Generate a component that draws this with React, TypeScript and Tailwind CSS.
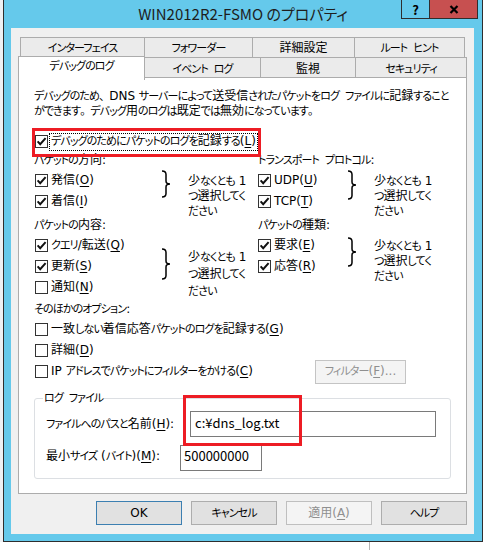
import clsx from "clsx";

// kana are set a little condensed next to the full-width kanji
const KANA = /([\u3000-\u30ff]+)/;
const PUNCT = /([、。])/;

function Kana({ s }: { s: string }) {
  return (
    <span className="text-[11px] tracking-[-0.9px]">
      {s.split(PUNCT).map((p, j) =>
        j % 2 ? (
          <span key={j} className="[font-feature-settings:normal]">
            {p}
          </span>
        ) : (
          p
        )
      )}
    </span>
  );
}

function Jp({ text }: { text: string }) {
  return (
    <>
      {text.split(KANA).map((s, i) => {
        if (i % 2) return <Kana key={i} s={s} />;
        if (s === " ")
          return (
            <span key={i} className="mx-[1px]">
              {" "}
            </span>
          );
        return s;
      })}
    </>
  );
}

// "&X" in a label marks the access key, drawn underlined
function Mn({ text }: { text: string }) {
  const i = text.indexOf("&");
  if (i < 0) return <Jp text={text} />;
  return (
    <>
      <Jp text={text.slice(0, i)} />
      <span className="underline decoration-1 underline-offset-[2px]">{text[i + 1]}</span>
      <Jp text={text.slice(i + 2)} />
    </>
  );
}

function CheckBox({ checked }: { checked?: boolean }) {
  return (
    <span className="flex h-[13px] w-[13px] shrink-0 items-center justify-center border border-[#333] bg-white">
      {checked && (
        <svg width="11" height="11" viewBox="0 0 11 11">
          <path d="M1.6 5.4 L4.2 8.2 L9.6 2.2" fill="none" stroke="#111" strokeWidth="2" />
        </svg>
      )}
    </span>
  );
}

function CheckRow({ label, checked, className }: { label: string; checked?: boolean; className?: string }) {
  return (
    <div className={clsx("flex items-center gap-[3px] whitespace-nowrap", className)}>
      <CheckBox checked={checked} />
      <span>
        <Mn text={label} />
      </span>
    </div>
  );
}

function Brace({ h }: { h: number }) {
  const m = h / 2;
  return (
    <svg width="10" height={h} viewBox={`0 0 10 ${h}`} className="shrink-0">
      <path
        d={`M1 1 C4 1 5 2 5 4.5 L5 ${m - 3} C5 ${m - 1} 6 ${m} 9 ${m} C6 ${m} 5 ${m + 1} 5 ${m + 3} L5 ${h - 4.5} C5 ${h - 2} 4 ${h - 1} 1 ${h - 1}`}
        fill="none"
        stroke="#000"
        strokeWidth="1.5"
      />
    </svg>
  );
}

type Item = [string, boolean];

function Group({
  title,
  items,
  rowClass,
  itemsClass,
  brace,
  braceClass,
  noteClass,
}: {
  title: string;
  items: Item[];
  rowClass: string;
  itemsClass: string;
  brace: number;
  braceClass: string;
  noteClass: string;
}) {
  return (
    <div>
      <div className="h-[16px] leading-[16px] whitespace-nowrap">
        <Jp text={title} />
      </div>
      <div className={clsx("mt-[2px] flex", rowClass)}>
        <div className={clsx("shrink-0", itemsClass)}>
          {items.map(([label, checked]) => (
            <CheckRow key={label} label={label} checked={checked} className="h-[21px]" />
          ))}
        </div>
        <div className={braceClass}>
          <Brace h={brace} />
        </div>
        <div className={clsx("ml-[17px] whitespace-nowrap", noteClass)}>
          <Jp text="少なくとも 1" />
          <br />
          <Jp text="つ選択してく" />
          <br />
          <Jp text="ださい" />
        </div>
      </div>
    </div>
  );
}

const topTabs = [
  { label: "インターフェイス", w: "w-[124px] border-l" },
  { label: "フォワーダー", w: "w-[108px] border-l" },
  { label: "詳細設定", w: "w-[102px] border-l" },
  { label: "ルート ヒント", w: "w-[111px] border-x" },
];

const frontTabs = [
  { label: "イベント ログ", w: "w-[116px]" },
  { label: "監視", w: "w-[95px]" },
  { label: "セキュリティ", w: "w-[111px]" },
];

function Tabs() {
  return (
    <div>
      <div className="ml-[2px] flex h-[20px]">
        {topTabs.map((t) => (
          <div
            key={t.label}
            className={clsx(
              "flex items-center justify-center border-t border-[#acacac] bg-[#ebebeb] pt-[2px] whitespace-nowrap",
              t.w
            )}
          >
            <span>
              <Jp text={t.label} />
            </span>
          </div>
        ))}
      </div>
      <div className="flex h-[20px]">
        <div className="relative z-10 -mt-px flex h-[24px] w-[127px] items-center justify-center border-x border-t border-[#acacac] bg-white pb-[5px]">
          <span>
            <Jp text="デバッグのログ" />
          </span>
        </div>
        {frontTabs.map((t) => (
          <div
            key={t.label}
            className={clsx(
              "flex items-center justify-center border-t border-r border-[#acacac] bg-[#ebebeb] pt-[3px] whitespace-nowrap",
              t.w
            )}
          >
            <span>
              <Jp text={t.label} />
            </span>
          </div>
        ))}
      </div>
    </div>
  );
}

function Panel() {
  return (
    <div className="relative h-[417px] border border-[#acacac] bg-white px-[15px] pt-[11px]">
      <p className="leading-[15px] whitespace-nowrap">
        <Jp text="デバッグのため、DNS サーバーによって送受信されたパケットをログ ファイルに記録すること" />
        <br />
        <Jp text="ができます。デバッグ用のログは既定では無効になっています。" />
      </p>

      <div className="mt-[12px] flex h-[21px] items-center gap-[1px] pl-px">
        <CheckBox checked />
        <span className="flex h-[18px] items-center border border-dotted border-black px-px whitespace-nowrap">
          <span>
            <Mn text="デバッグのためにパケットのログを記録する(&L)" />
          </span>
        </span>
      </div>

      <div className="grid grid-cols-[224px_1fr]">
        <Group
          title="パケットの方向:"
          items={[
            ["発信(&O)", true],
            ["着信(&I)", true],
          ]}
          rowClass="h-[42px]"
          itemsClass="w-[127px] pl-px"
          brace={28}
          braceClass="mt-0"
          noteClass="mt-[4px] leading-[15px]"
        />
        <Group
          title="トランスポート プロトコル:"
          items={[
            ["UDP(&U)", true],
            ["TCP(&T)", true],
          ]}
          rowClass="h-[42px]"
          itemsClass="w-[89px]"
          brace={30}
          braceClass="mt-0"
          noteClass="mt-[4px] leading-[15px]"
        />
        <div className="mt-[5px]">
          <Group
            title="パケットの内容:"
            items={[
              ["クエリ/転送(&Q)", true],
              ["更新(&S)", true],
              ["通知(&N)", false],
            ]}
            rowClass="h-[63px]"
            itemsClass="w-[127px] pl-px"
            brace={32}
            braceClass="mt-[13px]"
            noteClass="mt-[14px] leading-[16px]"
          />
        </div>
        <div className="mt-[5px]">
          <Group
            title="パケットの種類:"
            items={[
              ["要求(&E)", true],
              ["応答(&R)", true],
            ]}
            rowClass="h-[63px]"
            itemsClass="w-[89px]"
            brace={30}
            braceClass="mt-[2px]"
            noteClass="mt-[4px] leading-[15px]"
          />
        </div>
      </div>

      <div className="mt-[3px] h-[16px] leading-[16px]">
        <Jp text="そのほかのオプション:" />
      </div>
      <div className="mt-[2px] pl-px">
        <CheckRow label="一致しない着信応答パケットのログを記録する(&G)" className="h-[21px]" />
        <CheckRow label="詳細(&D)" className="h-[20px]" />
        <div className="flex h-[23px] items-center">
          <CheckRow label="IP アドレスでパケットにフィルターをかける(&C)" className="w-[280px]" />
          <button
            disabled
            className="h-[24px] w-[91px] border border-[#c4c4c4] bg-[#f4f4f4] text-[#8f8f8f]"
          >
            <Mn text="フィルター(&F)..." />
          </button>
        </div>
      </div>

      <fieldset className="mt-[7px] rounded-[3px] border border-[#dcdfe3] pb-[7px] pl-[11px]">
        <legend className="ml-[-3px] px-px leading-[16px]">
          <Jp text="ログ ファイル" />
        </legend>
        <div className="mt-[4px] flex h-[26px]">
          <label className="w-[144px] pt-[6px] whitespace-nowrap">
            <Mn text="ファイルへのパスと名前(&H):" />
          </label>
          <div className="w-[246px] border border-[#7a7a7a] bg-white pl-[4px] pt-[3px] font-['Noto_Sans_CJK_JP',sans-serif] text-[13px]">
            c:¥dns_log.txt
          </div>
        </div>
        <div className="mt-[8px] flex h-[26px]">
          <label className="w-[134px] pt-[4px] whitespace-nowrap">
            <Mn text="最小サイズ (バイト)(&M):" />
          </label>
          <div className="w-[82px] border border-[#7a7a7a] bg-white pl-[3px] pt-[2px] font-['Noto_Sans_CJK_JP',sans-serif] text-[13px]">
            500000000
          </div>
        </div>
      </fieldset>

      {/* red call-outs drawn over the dialog */}
      <span className="pointer-events-none absolute left-[13px] top-[50px] h-[29px] w-[229px] border-[3px] border-[#ed1c24]" />
      <span className="pointer-events-none absolute left-[164px] top-[317px] h-[51px] w-[119px] border-[3px] border-[#ed1c24]" />
    </div>
  );
}

function Buttons() {
  const base = "h-[24px] w-[86px] border";
  return (
    <div className="mt-[7px] flex justify-end gap-[9px]">
      <button className={clsx(base, "border-[#3c7fb1] bg-[#e1e1e1]")}>OK</button>
      <button className={clsx(base, "border-[#adadad] bg-[#e1e1e1]")}>
        <Jp text="キャンセル" />
      </button>
      <button disabled className={clsx(base, "border-[#bfbfbf] bg-[#f4f4f4] text-[#8f8f8f]")}>
        <Mn text="適用(&A)" />
      </button>
      <button className={clsx(base, "border-[#adadad] bg-[#e1e1e1]")}>
        <Jp text="ヘルプ" />
      </button>
    </div>
  );
}

function Dialog() {
  return (
    <div className="flex h-[542px] w-[480px] flex-col border-x border-b border-[#2e2e2e] bg-[#65c9eb]">
      <div className="grid h-[28px] shrink-0 grid-cols-[1fr_auto_1fr] items-center">
        <div />
        <div className="font-['Noto_Sans_CJK_JP',sans-serif] text-[15px] leading-[18px] whitespace-nowrap text-[#1e1e1e]">
          WIN2012R2-FSMO のプロパティ
        </div>
        <div className="flex h-full items-start justify-end pr-[4px]">
          <div className="flex h-[19px] border-x border-b border-[#2e2e2e]">
            <div className="flex w-[27px] items-center justify-center font-['Noto_Sans_CJK_JP',sans-serif] text-[13px] font-bold">
              ?
            </div>
            <div className="flex w-[48px] items-center justify-center border-l border-[#2e2e2e] bg-[#c75050]">
              <svg width="10" height="9" viewBox="0 0 10 9">
                <path d="M1.5 1 L8.5 8 M8.5 1 L1.5 8" stroke="#000" strokeWidth="2.2" />
              </svg>
            </div>
          </div>
        </div>
      </div>
      <div className="ml-[7px] mr-[8px] h-[506px] bg-[#f0f0f0] px-[7px] pt-[9px]">
        <Tabs />
        <Panel />
        <Buttons />
      </div>
    </div>
  );
}

export default function App() {
  return (
    <div className="flex h-[550px] w-[483px] flex-col overflow-hidden bg-white font-['DejaVu_Sans','Noto_Sans_CJK_JP',sans-serif] text-[12px] leading-[15px] text-black [font-feature-settings:'palt']">
      <div className="flex">
        <div className="w-[3px] bg-[#eef0f3]" />
        <Dialog />
      </div>
      <div className="flex-1">
        <div className="ml-[369px] h-full w-px bg-[#b4b4b4]" />
      </div>
    </div>
  );
}
